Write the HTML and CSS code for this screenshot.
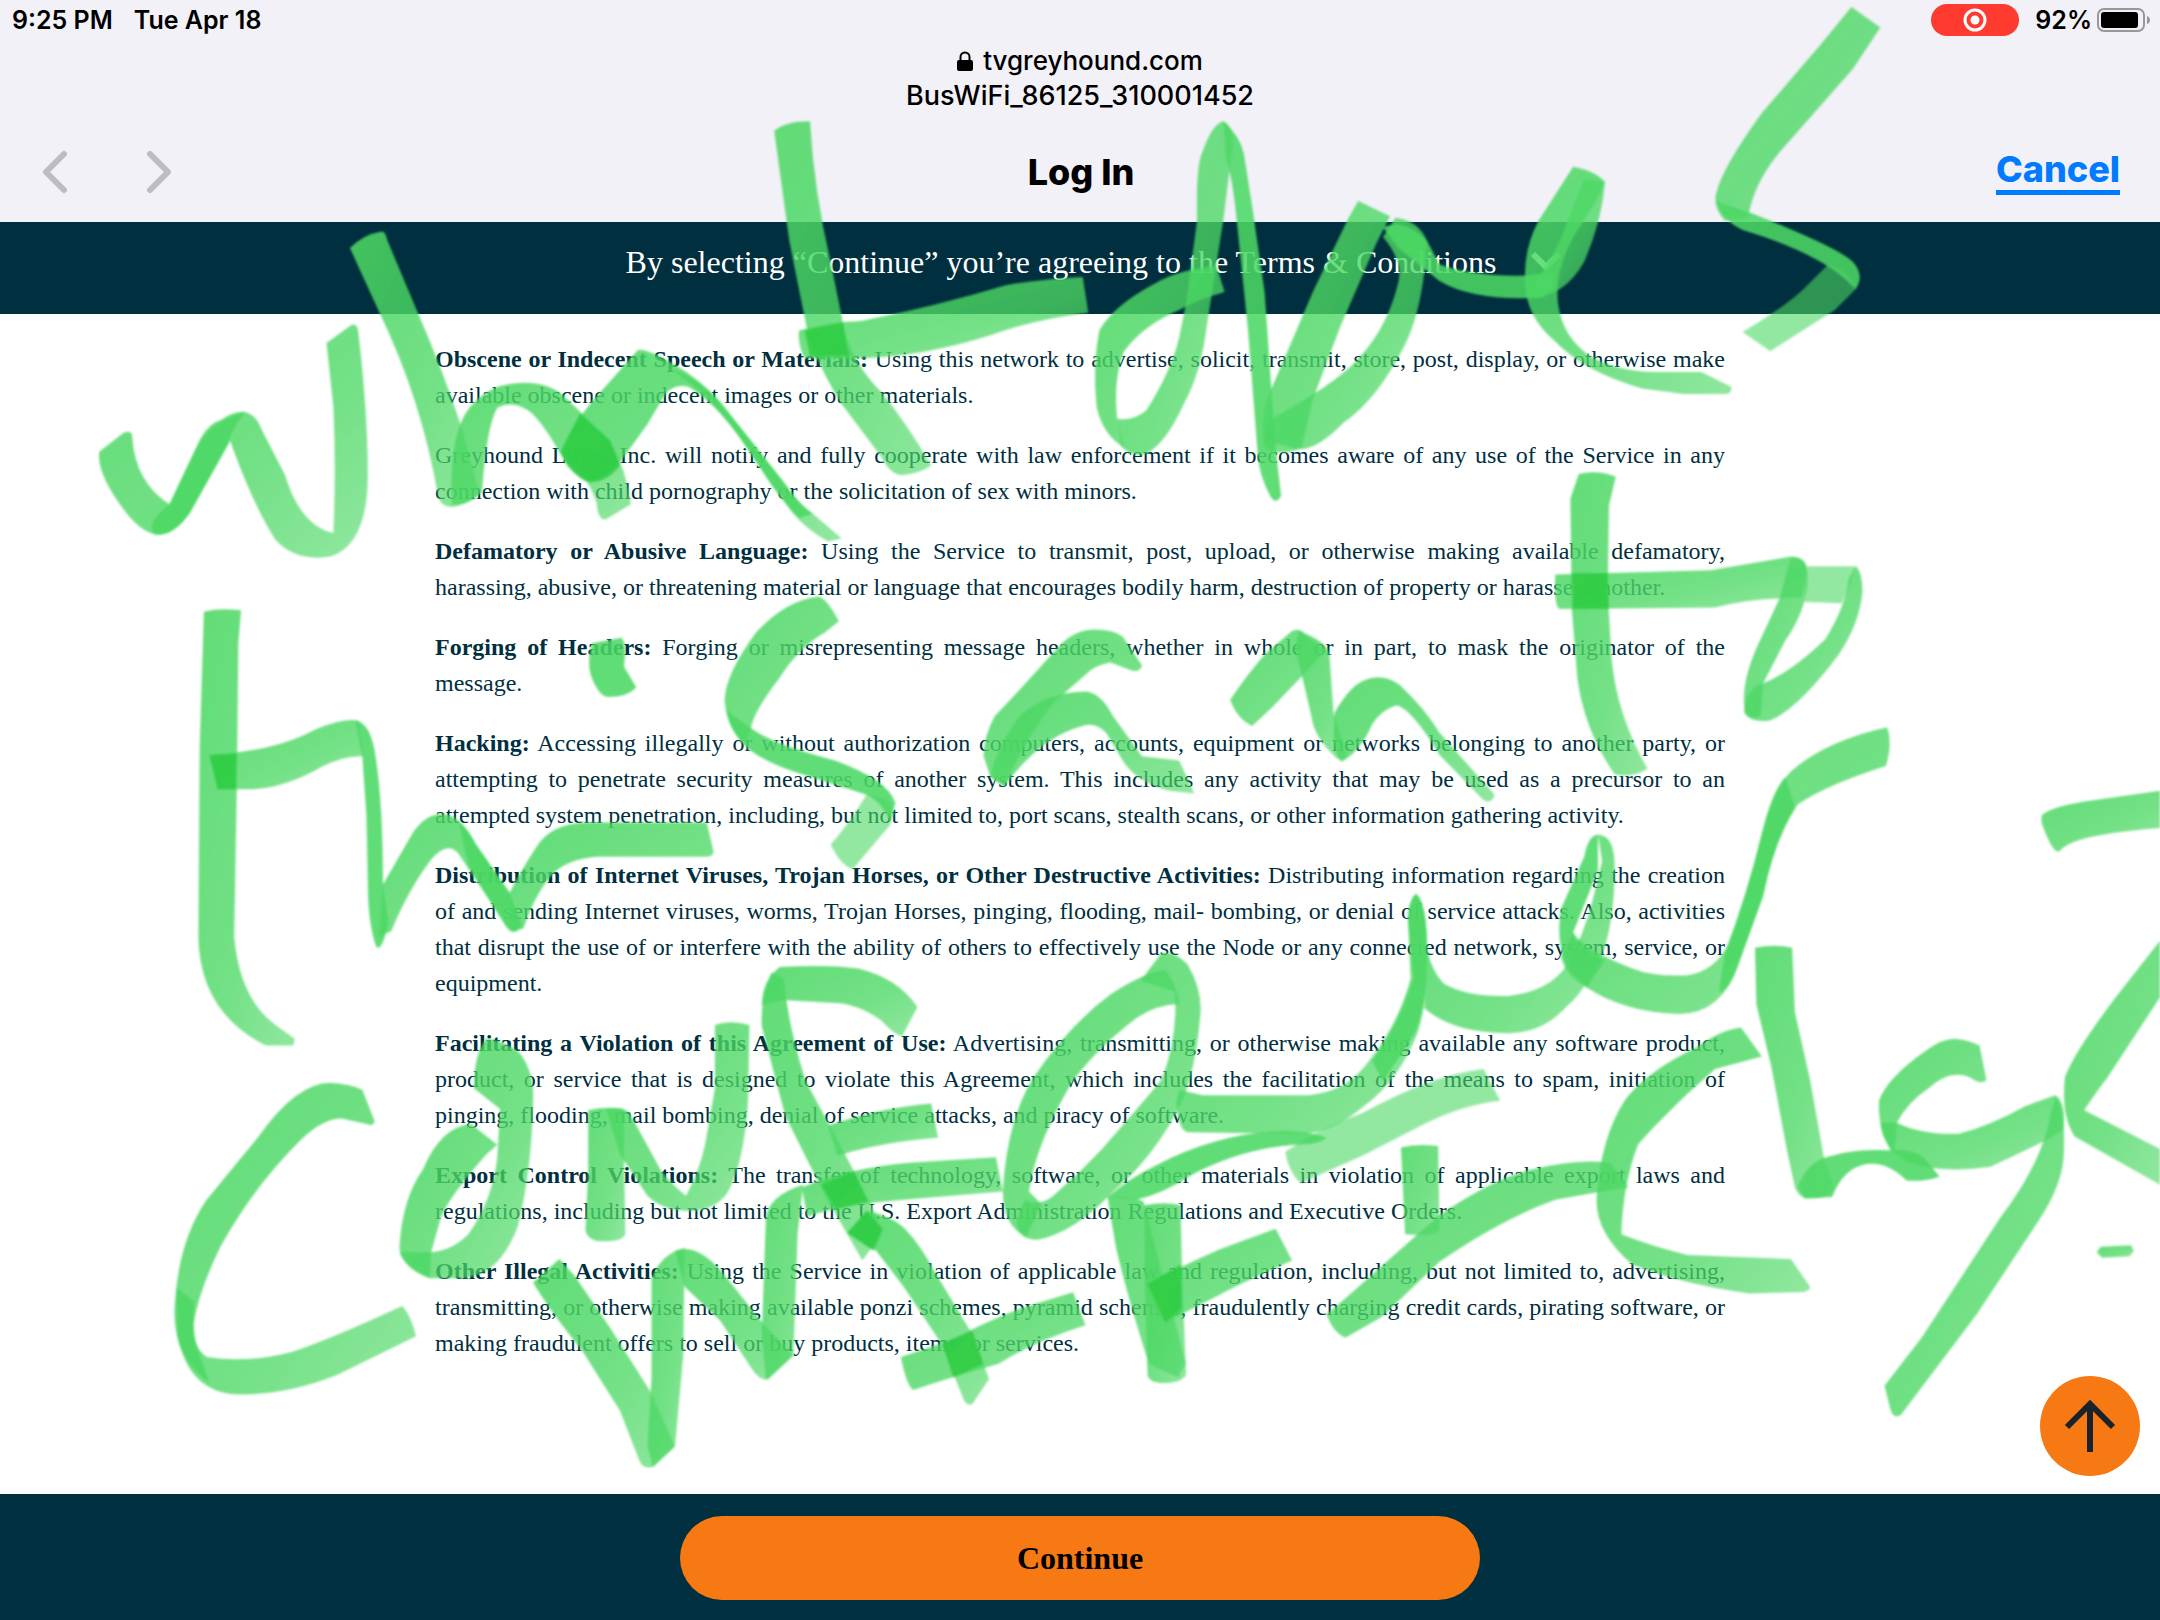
FILE: index.html
```html
<!DOCTYPE html>
<html lang="en">
<head>
<meta charset="utf-8">
<meta name="viewport" content="width=device-width, initial-scale=1">
<title>Log In</title>
<link rel="stylesheet" href="styles.css">
</head>
<body>
<header class="chrome">
  <div class="status">
    <div class="status-left"><span>9:25 PM</span><span>Tue Apr 18</span></div>
    <div class="status-right">
      <span class="recording">
        <svg width="24" height="24" viewBox="0 0 24 24" aria-hidden="true"><circle cx="12" cy="12" r="10" fill="none" stroke="#fff" stroke-width="3"/><circle cx="12" cy="12" r="4.5" fill="#fff"/></svg>
      </span>
      <span class="percent">92%</span>
      <svg width="54" height="24" viewBox="0 0 54 24" aria-hidden="true"><rect x="1" y="1" width="46" height="22" rx="6" fill="none" stroke="#98979c" stroke-width="2"/><rect x="4" y="4" width="37" height="16" rx="3" fill="#000"/><path d="M50 8q3 1 3 4t-3 4z" fill="#98979c"/></svg>
    </div>
  </div>
  <div class="site">
    <div class="domain">
      <svg width="16" height="20" viewBox="0 0 16 20" aria-hidden="true"><path d="M3.5 10V6a4.500 4.500 0 0 1 9 0v4" fill="none" stroke="#000" stroke-width="2"/><rect x="0" y="9" width="16" height="11" rx="2"/></svg>
      <span>tvgreyhound.com</span>
    </div>
    <div class="network">BusWiFi_86125_310001452</div>
  </div>
  <nav class="toolbar">
    <div class="history">
      <button class="nav-button" type="button" aria-label="Back"><svg width="26" height="44" viewBox="0 0 26 44"><path d="M22 4L4 22l18 18" fill="none" stroke="#bdbdbf" stroke-width="6" stroke-linecap="round" stroke-linejoin="round"/></svg></button>
      <button class="nav-button" type="button" aria-label="Forward"><svg width="26" height="44" viewBox="0 0 26 44"><path d="M4 4l18 18L4 40" fill="none" stroke="#bdbdbf" stroke-width="6" stroke-linecap="round" stroke-linejoin="round"/></svg></button>
    </div>
    <h1 class="title">Log In</h1>
    <a class="cancel" href="#">Cancel</a>
  </nav>
</header>

<button class="agreement" type="button">
  <span>By selecting “Continue” you’re agreeing to the Terms &amp; Conditions</span>
  <svg width="32" height="24" viewBox="0 0 32 24" aria-hidden="true"><path d="M3 4l13 13L29 4" fill="none" stroke="#fff" stroke-width="6"/></svg>
</button>

<main class="terms">
  <div class="terms-text">
    <p><strong>Obscene or Indecent Speech or Materials:</strong> Using this network to advertise, solicit, transmit, store, post, display, or otherwise make available obscene or indecent images or other materials.</p>
    <p>Greyhound Lines, Inc. will notify and fully cooperate with law enforcement if it becomes aware of any use of the Service in any connection with child pornography or the solicitation of sex with minors.</p>
    <p><strong>Defamatory or Abusive Language:</strong> Using the Service to transmit, post, upload, or otherwise making available defamatory, harassing, abusive, or threatening material or language that encourages bodily harm, destruction of property or harasses another.</p>
    <p><strong>Forging of Headers:</strong> Forging or misrepresenting message headers, whether in whole or in part, to mask the originator of the message.</p>
    <p><strong>Hacking:</strong> Accessing illegally or without authorization computers, accounts, equipment or networks belonging to another party, or attempting to penetrate security measures of another system. This includes any activity that may be used as a precursor to an attempted system penetration, including, but not limited to, port scans, stealth scans, or other information gathering activity.</p>
    <p><strong>Distribution of Internet Viruses, Trojan Horses, or Other Destructive Activities:</strong> Distributing information regarding the creation of and sending Internet viruses, worms, Trojan Horses, pinging, flooding, mail- bombing, or denial of service attacks. Also, activities that disrupt the use of or interfere with the ability of others to effectively use the Node or any connected network, system, service, or equipment.</p>
    <p><strong>Facilitating a Violation of this Agreement of Use:</strong> Advertising, transmitting, or otherwise making available any software product, product, or service that is designed to violate this Agreement, which includes the facilitation of the means to spam, initiation of pinging, flooding, mail bombing, denial of service attacks, and piracy of software.</p>
    <p><strong>Export Control Violations:</strong> The transfer of technology, software, or other materials in violation of applicable export laws and regulations, including but not limited to the U.S. Export Administration Regulations and Executive Orders.</p>
    <p><strong>Other Illegal Activities:</strong> Using the Service in violation of applicable law and regulation, including, but not limited to, advertising, transmitting, or otherwise making available ponzi schemes, pyramid schemes, fraudulently charging credit cards, pirating software, or making fraudulent offers to sell or buy products, items, or services.</p>
  </div>
</main>

<footer class="actions">
  <button class="continue" type="button">Continue</button>
</footer>

<button class="to-top" type="button" aria-label="Back to top">
  <svg width="52" height="52" viewBox="0 0 52 52"><path d="M26 52V4M3 27L26 4l23 23" fill="none" stroke="#1a222b" stroke-width="6"/></svg>
</button>

<!-- Freehand marker layer -->
<svg class="marker" viewBox="0 0 1568 1176" preserveAspectRatio="xMinYMin meet" aria-hidden="true">
  <defs>
    <filter id="soft" x="0" y="0" width="100%" height="100%"><feGaussianBlur stdDeviation="0.8"/></filter>
    <linearGradient id="fade" x1="0" y1="0" x2="1" y2="1">
      <stop offset="0" stop-color="#4cd864" stop-opacity="0.88"/>
      <stop offset="0.6" stop-color="#4cd864" stop-opacity="0.78"/>
      <stop offset="1" stop-color="#4cd864" stop-opacity="0.62"/>
    </linearGradient>
  </defs>
  <g filter="url(#soft)" fill="url(#fade)">
    <!-- what -->
    <path d="M72 328L90 314Q96 312 96 317Q98 350 123 366L142 326Q149 308 160 305Q170 298 178 299Q186 301 190 312L207 345C214 368 225 383 242 387Q244 340 242 295L237 249L255 236Q259 234 260 240Q267 300 267 345Q267 395 240 404Q215 408 200 392Q183 365 167 320L138 372Q126 388 115 388Q105 388 93 374Q70 345 72 328Z"/>
    <path class="dense" d="M112 388Q105 380 123 366L142 326Q152 305 178 299Q166 315 166 322L138 372Q126 390 112 388Z"/>
    <path d="M254 180Q264 170 277 168Q280 168 281 174L302 224Q322 270 335 310L348 358Q338 367 328 368Q320 368 318 360Q306 290 275 226Z"/>
    <path d="M328 366Q326 320 338 300Q352 279 377 278Q400 277 412 290L443 320Q455 342 458 366L440 377Q434 378 433 365Q430 355 424 347L407 330Q395 308 385 299Q372 290 361 296Q353 310 350 357Q340 368 328 366Z"/>
    <path d="M463 254Q470 253 490 265Q508 275 523 292L569 350Q580 366 590 373L611 391L601 393Q585 384 575 372L540 322Q520 293 500 281Q490 278 483 286L470 308L447 340Q436 351 424 349Q410 340 407 328Q414 308 440 280Z"/>
    <path class="dense" d="M484 266Q508 275 523 292L569 350Q578 364 590 373L580 376Q570 366 560 352L540 322Q515 285 484 266Z"/>
    <path class="deep" d="M421 300L443 320L450 338Q440 351 427 350Q412 342 407 328Z"/>
    <path d="M562 95Q570 88 588 88Q591 140 603 190L613 240Q620 265 640 285Q660 310 676 338Q668 344 654 345Q646 344 640 332L610 292Q592 262 586 240L573 175Z"/>
    <path d="M580 240Q600 234 625 233Q680 222 730 207Q760 202 786 201L790 227Q750 232 720 243Q670 259 625 260L584 260Q579 250 580 240Z"/>
    <path class="deep" d="M584 240L612 234L616 258L588 259Z"/>
    <!-- does -->
    <path d="M889 212L883 193Q855 196 838 206Q808 222 798 240Q793 265 796 295Q800 315 816 325L811 304Q808 275 816 255Q830 236 856 225Q868 218 889 212Z"/>
    <path d="M888 88Q898 92 893 120L888 160L876 237Q872 270 860 292Q845 325 830 330Q820 331 814 324L811 304Q822 306 832 298Q850 270 856 245L861 220L869 160Q868 120 873 110Q880 90 888 88Z"/>
    <path class="dense" d="M888 88Q900 98 903 112L909 150L918 212L926 325L930 360Q926 367 922 360Q914 345 913 330L906 240L898 162Q895 130 890 115Z"/>
    <path d="M986 146L1009 157L999 177L973 237L953 290L945 325Q930 332 918 325Q914 300 923 282L953 212L979 158Z"/>
    <path d="M1013 158Q1030 160 1036 175L1034 197Q1030 230 1020 250Q1000 290 975 307Q955 328 940 326Q925 320 918 322Q918 305 930 300Q975 275 989 257Q1008 235 1015 205Q1019 190 1004 172Z"/>
    <path class="dense" d="M1004 165Q1020 158 1036 175L1045 192Q1070 201 1108 200L1128 197Q1130 210 1120 216Q1070 219 1045 204L1015 180Z"/>
    <path d="M1108 214Q1130 185 1138 160L1150 130L1165 132Q1163 160 1150 190Q1135 217 1108 216Z"/>
    <path d="M1142 121Q1158 124 1165 132Q1160 145 1150 160Q1128 190 1131 220Q1134 245 1155 259Q1175 270 1202 270L1235 270L1257 281Q1257 286 1253 286L1222 286L1192 282Q1150 270 1128 247Q1108 230 1107 205Q1106 180 1117 160Z"/>
    <path d="M1344 5L1365 20L1345 50L1294 108Q1273 132 1269 158L1252 160Q1243 150 1246 140Q1250 122 1279 82L1322 32Z"/>
    <path class="dense" d="M1246 146Q1262 152 1272 155Q1335 180 1345 190Q1354 200 1347 210Q1325 185 1265 167Q1250 160 1246 146Z"/>
    <path class="light" d="M1327 192Q1343 198 1347 210L1332 225L1285 255L1265 241Q1300 220 1312 207Z"/>
    <!-- this -->
    <path d="M148 444Q160 441 175 443L173 467L172 567L170 680Q174 725 200 744L214 754L213 759L193 759Q145 735 144 680L145 542Z"/>
    <path d="M152 548L173 546Q200 543 220 534Q245 521 260 523L264 549Q250 548 233 557Q205 573 180 573L158 573Z"/>
    <path class="deep" d="M152 548L172 547L171 573L158 573Z"/>
    <path class="dense" d="M258 523Q268 524 272 545Q278 580 278 642L282 670Q277 692 273 687Q267 670 267 640L266 592L263 549Z"/>
    <path d="M278 642L300 604Q310 590 322 591Q335 592 345 612L370 648L376 672Q372 680 366 670L333 620Q325 610 313 624Q297 645 284 676L275 680Z"/>
    <path class="dense" d="M333 597Q340 602 346 614L370 648L379 672Q373 681 367 672L340 628Z"/>
    <path d="M370 648Q378 632 390 614Q400 598 425 597L513 597L518 618Q518 622 512 622L433 622Q410 624 400 636Q388 650 380 674L371 676Z"/>
    <path class="dense" d="M430 467L451 463Q455 466 453 484L462 499Q455 506 442 506Q437 506 433 499Q424 485 430 467Z"/>
    <path d="M594 433Q600 434 609 451L599 459Q580 470 566 492Q546 518 545 530L540 540Q528 528 526 509Q526 490 549 459Q570 436 594 433Z"/>
    <path class="dense" d="M527 515Q535 522 546 529Q560 540 606 552Q645 566 650 583L646 596Q640 582 629 577L589 564Q560 556 545 545Q530 533 527 515Z"/>
    <path class="light" d="M629 577Q648 578 649 590L646 599L619 631Q610 628 603 613Q615 600 629 577Z"/>
    <!-- an -->
    <path d="M714 549Q714 535 722 520L739 502L769 469Q780 457 795 457Q808 457 815 462L829 483Q828 488 822 487L806 481Q795 483 789 489L765 510Q745 535 729 571L719 564Z"/>
    <path d="M719 564Q722 545 740 520Q760 502 789 502Q800 504 808 520L829 549L856 552L867 576L849 574Q825 568 815 552L803 532Q795 524 786 527Q755 535 729 571Z"/>
    <path d="M893 508Q905 490 919 474L938 458Q945 455 948 462L963 472L946 490L923 514L909 527Q898 522 893 508Z"/>
    <path d="M943 458Q964 466 965 475L968 517L978 549Q974 555 968 548Q954 535 952 520L945 490L940 470Z"/>
    <path d="M969 517Q980 498 990 494Q1003 488 1016 497Q1035 515 1045 532L1085 577Q1083 584 1077 581L1045 548Q1025 515 1014 512Q1003 515 996 526Q988 545 974 553Q966 545 969 517Z"/>
    <!-- to -->
    <path d="M1146 344Q1160 341 1173 346L1168 367L1167 430L1170 479Q1174 520 1196 558Q1185 565 1172 562Q1150 530 1145 492L1141 442L1140 362Z"/>
    <path d="M1129 417L1242 414L1300 404Q1312 404 1312 415L1308 434Q1270 434 1245 441L1132 442Q1128 440 1129 417Z"/>
    <path class="deep" d="M1141 416L1167 416L1168 442L1142 442Z"/>
    <path d="M1300 405Q1314 404 1312 425Q1310 445 1296 465L1280 496L1278 520Q1266 524 1266 510Q1265 490 1279 462L1292 434Z"/>
    <path d="M1266 517Q1268 498 1280 496Q1300 488 1325 464Q1340 440 1342 420L1347 411Q1352 415 1352 430Q1350 452 1335 475Q1305 515 1285 523Q1270 525 1266 517Z"/>
    <path class="light" d="M1312 411L1347 411L1343 425L1337 438L1310 437Z"/>
    <!-- user -->
    <path d="M1028 649Q1036 655 1036 692Q1036 730 1029 750Q1015 785 990 803Q965 824 943 823L862 822Q855 820 854 800L856 791L873 795L950 795Q975 793 990 775Q1015 745 1024 710L1022 667Q1023 652 1028 649Z"/>
    <path class="dense" d="M1028 649Q1036 655 1036 692Q1036 730 1027 750L1004 785L996 770Q1015 745 1026 710L1022 667Q1023 652 1028 649Z"/>
    <path d="M1036 690Q1040 706 1048 714Q1065 724 1095 723Q1122 720 1135 704Q1150 680 1157 650L1163 625L1160 606Q1171 606 1172 625Q1173 660 1165 688Q1152 718 1138 730Q1120 750 1095 750Q1055 750 1034 732Z"/>
    <path class="dense" d="M1160 606Q1153 606 1150 622L1133 660Q1129 690 1140 704L1152 717L1165 697Q1145 690 1142 677L1160 632Z"/>
    <path d="M1133 694L1142 677Q1150 690 1185 703Q1200 709 1225 708Q1245 705 1255 685Q1268 650 1279 605Q1288 572 1300 560Q1325 538 1370 528Q1374 540 1369 556Q1325 570 1305 584Q1288 610 1280 650L1262 700Q1250 736 1219 736Q1180 735 1152 717Q1136 708 1133 694Z"/>
    <path class="dense" d="M1252 692Q1268 650 1279 605Q1286 575 1296 564L1303 586Q1288 610 1280 650L1262 700Q1255 720 1248 720Z"/>
    <!-- question mark -->
    <path d="M1482 592Q1488 586 1512 582L1568 574L1568 601Q1530 604 1512 609Q1500 612 1495 618Q1490 620 1482 597Z"/>
    <path d="M1568 683L1535 725Q1505 765 1499 782Q1496 810 1506 825L1568 860L1568 834L1513 806Q1520 795 1530 782L1568 724Z"/>
    <path d="M1525 905L1547 904L1549 908L1546 912L1526 913L1522 909Z"/>
    <!-- confq -->
    <path d="M240 786Q255 787 263 791L272 814Q271 818 266 816L248 812Q235 812 220 826Q185 860 160 905Q143 940 140 965Q142 980 150 985Q180 990 213 981Q240 972 292 948Q298 954 302 970L245 998Q205 1014 167 1012Q142 1008 133 984Q125 965 127 945Q130 900 150 871L187 826Q215 786 240 786Z"/>
    <path class="dense" d="M128 935L141 945Q139 970 145 984L152 1004Q133 990 129 970Z"/>
    <path d="M342 816L361 831L353 838Q325 870 320 884L313 909L312 928Q290 918 290 905Q292 870 307 849Q320 818 342 816Z"/>
    <path d="M353 754Q365 755 377 764Q388 778 387 799Q386 850 376 890Q362 928 333 928L312 928Q295 922 290 909L313 909Q328 908 340 896Q358 870 361 840L363 805L344 790Q344 765 353 754Z"/>
    <path d="M427 806Q440 803 453 805L453 840L454 896Q452 901 440 901Q427 902 425 893L427 850Z"/>
    <path d="M440 805Q453 803 457 808L480 850Q490 862 498 868Q508 850 512 830L519 790L519 744Q530 740 544 744L543 800Q540 845 528 866Q518 880 497 879Q480 878 470 868L450 838Z"/>
    <path d="M566 702Q600 700 623 703Q652 710 666 731L655 752Q650 752 640 741Q622 728 603 728L568 726L553 730Q553 712 566 702Z"/>
    <path d="M560 706Q552 725 553 745L570 810L599 868L614 894L626 915L640 896L634 878L612 835L585 785Q572 745 569 710Z"/>
    <path d="M601 817Q640 804 676 801L681 826Q640 829 608 839Z"/>
    <path d="M582 862Q615 848 660 844L723 840L728 865L656 871Q615 874 586 883Z"/>
    <path class="deep" d="M596 860L620 850L630 872L607 878Z"/>
    <path d="M846 704Q854 714 856 729Q840 729 825 739Q795 762 778 786Q752 830 747 865L756 874L745 898Q728 890 728 864Q731 815 749 784Q775 745 806 722Q830 706 846 704Z"/>
    <path d="M843 692Q852 690 862 700Q874 720 871 740Q868 775 858 800Q838 840 809 864Q780 895 753 900Q738 900 738 885L744 871Q757 877 768 865Q785 850 800 834Q830 800 843 784Q855 755 853 720L828 712Z"/>
    <!-- wifi -->
    <path d="M387 931L406 914L417 926L443 964L472 1010L490 1050L474 1065Q467 1067 464 1060L450 1024L423 981Q398 950 387 931Z"/>
    <path d="M473 928Q480 910 497 906L496 984L490 1050L474 1065L470 1050L473 1000Z"/>
    <path d="M490 908Q505 902 523 922L555 962L576 984L558 1001Q552 1003 546 994L523 959L497 934Z"/>
    <path d="M556 884Q558 868 583 860L579 896L576 984L556 1002L553 969Z"/>
    <path d="M615 895L629 879Q645 882 656 891Q668 903 679 924L706 969L718 1001L706 1019Q701 1022 698 1012L683 975L656 934L636 908Z"/>
    <path class="deep" d="M615 895L629 879L641 892L634 908Z"/>
    <path d="M654 985L690 973Q710 962 740 950L779 938L788 962Q750 974 725 990Q690 1000 663 1009Q658 1006 654 985Z"/>
    <path class="deep" d="M684 975L706 966L714 990L692 1000Z"/>
    <path class="dense" d="M804 869Q820 855 839 846Q885 822 933 821Q955 822 963 826Q958 831 940 831Q900 834 863 854Q845 866 825 871Z"/>
    <path d="M804 869Q818 868 830 872L845 930L861 990L855 1000L834 990Q818 940 810 905Z"/>
    <path d="M831 875Q845 872 857 875L858 920L861 998Q858 1004 845 1004Q834 1004 833 998L831 930Z"/>
    <path d="M833 932Q860 918 885 907L926 892L938 915Q900 932 885 940L846 960Q836 950 833 932Z"/>
    <path class="deep" d="M833 932L857 918L858 950L846 960Z"/>
    <path class="light" d="M933 836Q960 818 989 808Q1040 780 1077 776L1089 799Q1060 802 1030 818L989 839L944 859Q935 850 933 836Z"/>
    <path d="M1017 833Q1030 830 1044 832L1045 893Q1040 898 1020 896Z"/>
    <path d="M963 954Q980 940 1003 919L1045 882Q1085 855 1112 849Q1145 841 1169 844L1182 862Q1155 866 1129 871Q1090 885 1045 916L1003 956L977 971Q968 968 963 954Z"/>
    <!-- chg -->
    <path d="M1264 746L1279 767L1245 776L1225 794Q1200 818 1189 831Q1178 860 1177 896Q1200 905 1225 911L1300 914L1314 934Q1314 938 1305 938L1270 939Q1220 932 1185 918Q1158 895 1159 870Q1162 825 1180 798Q1195 778 1232 760Q1250 747 1264 746Z"/>
    <path d="M1274 688Q1288 685 1301 688L1303 735L1314 784L1324 840L1331 862Q1328 870 1316 870Q1306 871 1303 862L1297 834L1286 775L1275 729Z"/>
    <path class="dense" d="M1305 862Q1312 842 1330 839Q1345 834 1372 835Q1392 834 1398 842L1408 854Q1398 858 1384 857Q1370 843 1355 845Q1338 848 1330 869L1310 870Z"/>
    <path d="M1419 754Q1430 755 1437 759L1442 784Q1438 788 1430 782Q1415 776 1400 790Q1385 800 1377 815L1375 839Q1363 822 1364 799Q1370 782 1399 762Q1410 754 1419 754Z"/>
    <path d="M1377 815Q1395 824 1422 823Q1445 817 1470 803L1492 795Q1500 800 1498 820L1485 828Q1460 840 1445 847Q1410 852 1385 844Q1366 832 1365 815Z"/>
    <path d="M1492 796Q1500 805 1498 841Q1496 862 1480 886L1435 954L1380 1027Q1374 1031 1372 1022L1368 1006L1395 971L1452 884Q1478 850 1486 820Z"/>
  </g>
</svg>
</body>
</html>
```
FILE: styles.css
```css
* {
  box-sizing: border-box;
}

body {
  position: relative;
  display: flex;
  flex-direction: column;
  min-height: 100vh;
  margin: 0;
  overflow-x: hidden;
  background: #fff;
  color: #002f3f;
  font-family: "Liberation Serif", "Times New Roman", serif;
}

button {
  padding: 0;
  border: 0;
  font-family: inherit;
}

svg {
  display: block;
}

.chrome {
  background: #f2f1f8;
  color: #000;
  font-family: Inter, sans-serif;
}

.status {
  display: flex;
  align-items: center;
  justify-content: space-between;
  height: 40px;
  padding: 0 9px 0 12px;
  font-size: 25px;
  font-weight: 600;
}

.status-left {
  display: flex;
  gap: 21px;
}

.status-right {
  display: flex;
  align-items: center;
}

.recording {
  display: flex;
  align-items: center;
  justify-content: center;
  width: 88px;
  height: 32px;
  margin-right: 16px;
  border-radius: 16px;
  background: #ff3b30;
}

.percent {
  margin-right: 5px;
}

.site {
  padding-top: 3px;
  font-size: 26px;
  font-weight: 500;
  line-height: 35px;
  text-align: center;
}

.domain {
  display: flex;
  align-items: center;
  justify-content: center;
  gap: 10px;
}

.network {
  font-size: 27px;
}

.toolbar {
  display: grid;
  grid-template-columns: 1fr auto 1fr;
  align-items: center;
  height: 109px;
  padding: 8px 40px 0 42px;
}

.history {
  display: flex;
  gap: 78px;
}

.nav-button {
  background: none;
}

.title {
  margin: 0;
  font-size: 36px;
  font-weight: 800;
}

.cancel {
  justify-self: end;
  border-bottom: 5px solid #007aff;
  color: #007aff;
  font-size: 36px;
  font-weight: 800;
  line-height: 42px;
  text-decoration: none;
}

.agreement {
  display: flex;
  align-items: center;
  justify-content: center;
  gap: 34px;
  height: 92px;
  padding: 0 0 12px 28px;
  background: #002f3f;
  color: #fff;
  font-size: 32px;
}

.terms {
  flex: 1;
  padding: 27px 40px;
}

.terms-text {
  max-width: 1290px;
  margin: 0 auto;
  font-size: 24px;
  line-height: 36px;
  text-align: justify;
}

.terms-text p {
  margin: 0 0 24px;
}

.actions {
  display: flex;
  justify-content: center;
  padding: 22px 40px 20px;
  background: #002f3f;
}

.continue {
  width: 100%;
  max-width: 800px;
  height: 84px;
  border-radius: 42px;
  background: #f77913;
  color: #000;
  font-size: 32px;
  font-weight: 700;
}

.to-top {
  position: fixed;
  right: 20px;
  bottom: 144px;
  display: flex;
  align-items: center;
  justify-content: center;
  width: 100px;
  height: 100px;
  border-radius: 50%;
  background: #f77913;
}

.marker {
  position: absolute;
  top: 0;
  left: 0;
  width: 100%;
  pointer-events: none;
}

.light {
  fill: #4cd864;
  fill-opacity: 0.6;
}

.dense {
  fill: #4cd864;
  fill-opacity: 0.88;
}

.deep {
  fill: #2ecc40;
  fill-opacity: 0.8;
}
```
